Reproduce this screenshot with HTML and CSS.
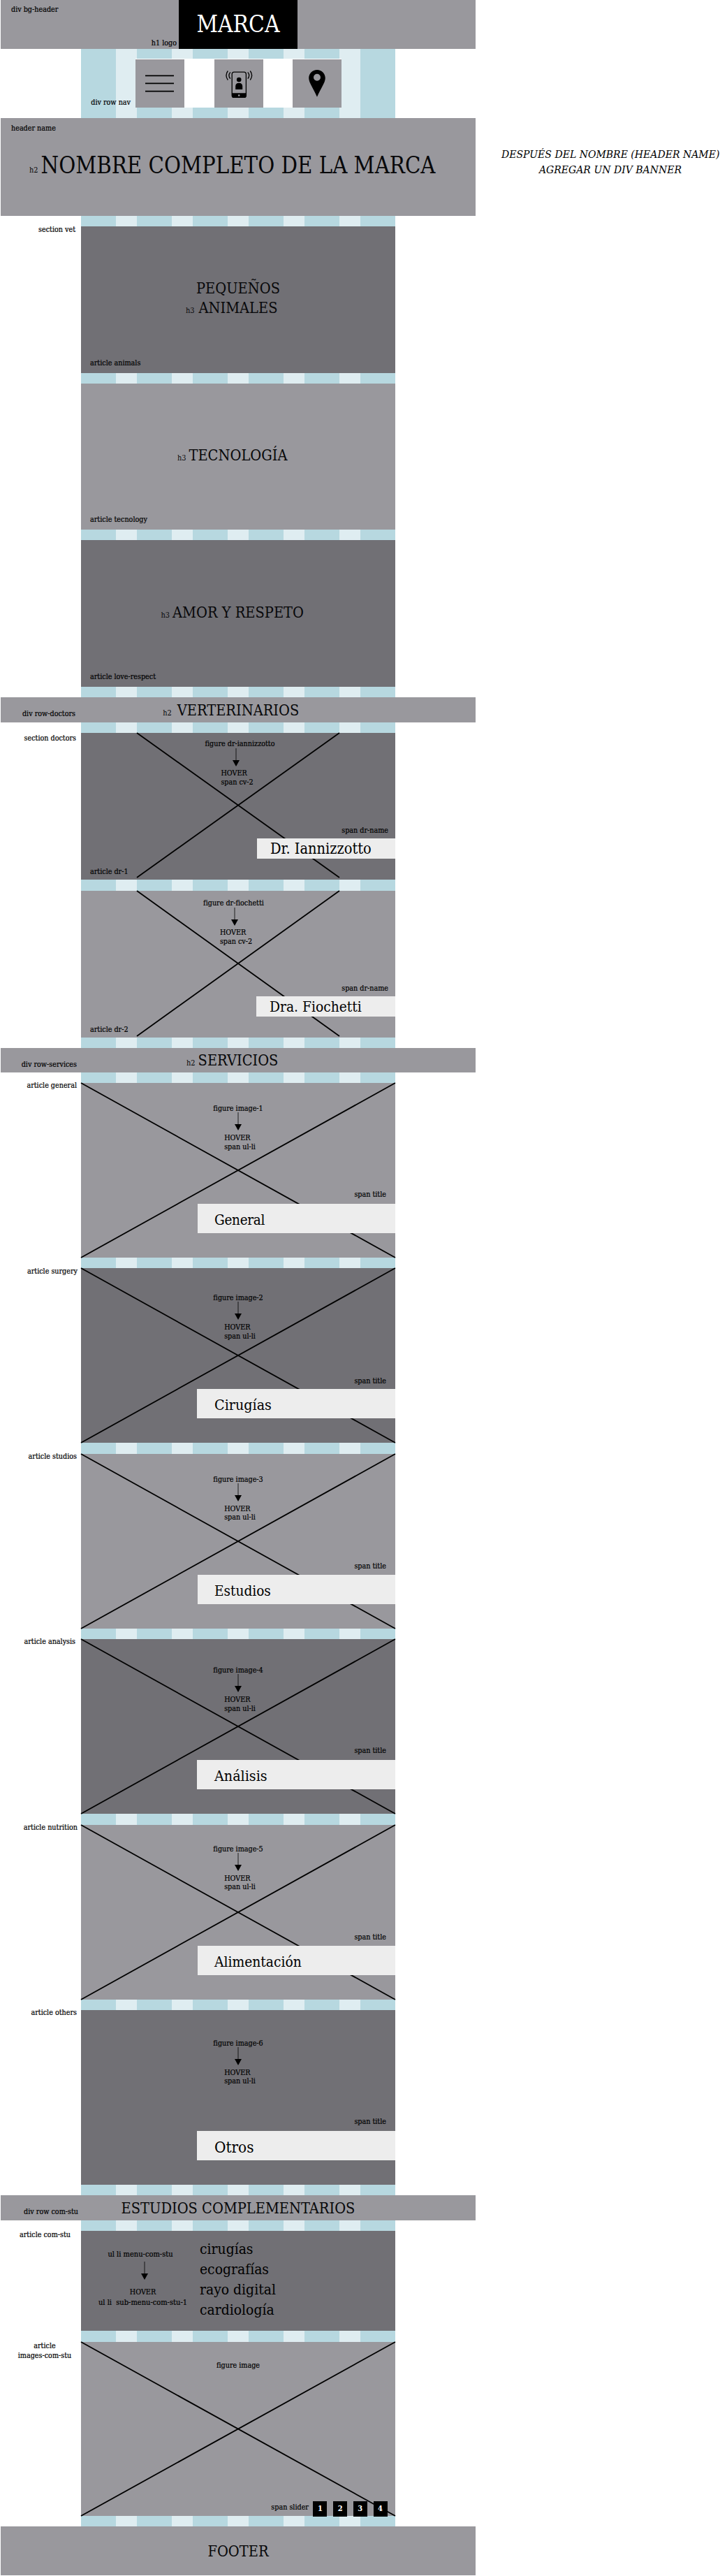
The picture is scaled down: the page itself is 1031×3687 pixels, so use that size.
FILE: index.html
```html
<!DOCTYPE html>
<html lang="es">
<head>
<meta charset="utf-8">
<title>Marca</title>
<link rel="stylesheet" href="styles.css">
</head>
<body>
<svg class="defs" width="0" height="0">
  <symbol id="arrow" viewBox="0 0 10 26"><path d="M5 0V18" stroke="#000" stroke-width="0.8"/><path d="M0 17H10L5 26Z"/></symbol>
</svg>
<main class="layout">
  <header class="bg-header">
    <span class="label at-top">div bg-header</span>
    <span class="label logo-label">h1 logo</span>
    <h1 class="logo">MARCA</h1>
  </header>

  <nav class="row-nav">
    <span class="label nav-label">div row nav</span>
    <div class="nav-items">
      <a class="nav-item"><svg width="70" height="69" viewBox="0 0 70 69"><path d="M14 23.4H55M14 34.4H55M14 45.6H55" stroke="#000" stroke-width="1.7"/></svg></a>
      <a class="nav-item"><svg width="70" height="69" viewBox="0 0 70 69">
        <rect x="25.2" y="18.2" width="20.2" height="36.2" rx="3" fill="none" stroke="#000" stroke-width="1.3"/>
        <path d="M25 48.3H45.6V52Q45.600 55 42.600 55H28Q25 55 25 52Z"/>
        <circle cx="35.2" cy="51.600" r="1.3" fill="#99989d"/>
        <circle cx="35.2" cy="29" r="3.3"/>
        <path d="M30.200 43V38.500Q30.200 33.700 35.200 33.700T40.200 38.500V43Z"/>
        <path d="M19.300 16.500Q14.600 23 19.300 29.500M22.800 18.300Q19 23 22.800 27.700M51.300 16.500Q56 23 51.300 29.500M47.800 18.300Q51.600 23 47.800 27.700" fill="none" stroke="#000" stroke-width="1.3"/>
      </svg></a>
      <a class="nav-item"><svg width="70" height="69" viewBox="0 0 70 69"><path fill-rule="evenodd" d="M35 15C28.300 15 23.200 20.200 23.200 26.800C23.200 33.500 30 42 35 53.700C40 42 46.800 33.500 46.800 26.800C46.800 20.200 41.700 15 35 15ZM35 20.800A5 5 0 1 1 35 30.800A5 5 0 1 1 35 20.800Z"/></svg></a>
    </div>
  </nav>

  <header class="header-name">
    <span class="label at-top">header name</span>
    <h2 class="brand"><span class="line"><small class="lead">h2</small>NOMBRE COMPLETO DE LA MARCA</span></h2>
  </header>

  <section class="vet">
    <span class="label side">section vet</span>
    <article class="card dark double">
      <h3 class="title"><span>PEQUEÑOS</span><span class="line"><small class="lead">h3</small>ANIMALES</span></h3>
      <span class="label corner">article animals</span>
    </article>
    <article class="card tecnology">
      <h3 class="title"><span class="line"><small class="lead">h3</small>TECNOLOGÍA</span></h3>
      <span class="label corner">article tecnology</span>
    </article>
    <article class="card dark">
      <h3 class="title"><span class="line"><small class="lead">h3</small>AMOR Y RESPETO</span></h3>
      <span class="label corner">article love-respect</span>
    </article>
  </section>

  <div class="band row-doctors">
    <span class="label">div row-doctors</span>
    <h2 class="title"><span class="line"><small class="lead">h2</small>VERTERINARIOS</span></h2>
  </div>

  <section class="doctors">
    <span class="label side">section doctors</span>
    <article class="doctor dark">
      <svg class="cross narrow" width="290" height="207"><path d="M0 0L290 207M290 0L0 207"/></svg>
      <span class="label figure">figure dr-iannizzotto</span>
      <svg class="arrow" width="10" height="26"><use href="#arrow"/></svg>
      <p class="label hover">HOVER<br>span cv-2</p>
      <span class="label name-label">span dr-name</span>
      <strong class="tag">Dr. Iannizzotto</strong>
      <span class="label article-label">article dr-1</span>
    </article>
    <article class="doctor second">
      <svg class="cross narrow" width="290" height="208"><path d="M0 0L290 208M290 0L0 208"/></svg>
      <span class="label figure">figure dr-fiochetti</span>
      <svg class="arrow" width="10" height="26"><use href="#arrow"/></svg>
      <p class="label hover">HOVER<br>span cv-2</p>
      <span class="label name-label">span dr-name</span>
      <strong class="tag">Dra. Fiochetti</strong>
      <span class="label article-label">article dr-2</span>
    </article>
  </section>

  <div class="band row-services">
    <span class="label">div row-services</span>
    <h2 class="title"><span class="line"><small class="lead">h2</small>SERVICIOS</span></h2>
  </div>

  <section class="services">
    <div class="service-row general">
      <span class="label side">article general</span>
      <article class="service">
        <svg class="cross" width="450" height="250"><path d="M0 0L450 250M450 0L0 250"/></svg>
        <span class="label">figure image-1</span>
        <svg class="arrow" width="10" height="26"><use href="#arrow"/></svg>
        <p class="label hover">HOVER<br>span ul-li</p>
        <span class="label title-label">span title</span>
        <strong class="tag">General</strong>
      </article>
    </div>
    <div class="service-row surgery">
      <span class="label side">article surgery</span>
      <article class="service dark">
        <svg class="cross" width="450" height="250"><path d="M0 0L450 250M450 0L0 250"/></svg>
        <span class="label">figure image-2</span>
        <svg class="arrow" width="10" height="26"><use href="#arrow"/></svg>
        <p class="label hover">HOVER<br>span ul-li</p>
        <span class="label title-label">span title</span>
        <strong class="tag">Cirugías</strong>
      </article>
    </div>
    <div class="service-row studios">
      <span class="label side">article studios</span>
      <article class="service">
        <svg class="cross" width="450" height="250"><path d="M0 0L450 250M450 0L0 250"/></svg>
        <span class="label">figure image-3</span>
        <svg class="arrow" width="10" height="26"><use href="#arrow"/></svg>
        <p class="label hover">HOVER<br>span ul-li</p>
        <span class="label title-label">span title</span>
        <strong class="tag">Estudios</strong>
      </article>
    </div>
    <div class="service-row analysis">
      <span class="label side">article analysis</span>
      <article class="service dark">
        <svg class="cross" width="450" height="250"><path d="M0 0L450 250M450 0L0 250"/></svg>
        <span class="label">figure image-4</span>
        <svg class="arrow" width="10" height="26"><use href="#arrow"/></svg>
        <p class="label hover">HOVER<br>span ul-li</p>
        <span class="label title-label">span title</span>
        <strong class="tag">Análisis</strong>
      </article>
    </div>
    <div class="service-row nutrition">
      <span class="label side">article nutrition</span>
      <article class="service">
        <svg class="cross" width="450" height="250"><path d="M0 0L450 250M450 0L0 250"/></svg>
        <span class="label">figure image-5</span>
        <svg class="arrow" width="10" height="26"><use href="#arrow"/></svg>
        <p class="label hover">HOVER<br>span ul-li</p>
        <span class="label title-label">span title</span>
        <strong class="tag">Alimentación</strong>
      </article>
    </div>
    <div class="service-row others">
      <span class="label side">article others</span>
      <article class="service dark">
        <span class="label">figure image-6</span>
        <svg class="arrow" width="10" height="26"><use href="#arrow"/></svg>
        <p class="label hover">HOVER<br>span ul-li</p>
        <span class="label title-label">span title</span>
        <strong class="tag">Otros</strong>
      </article>
    </div>
  </section>

  <div class="band row-com-stu">
    <span class="label">div row com-stu</span>
    <h2 class="title">ESTUDIOS COMPLEMENTARIOS</h2>
  </div>

  <section class="com-stu">
    <span class="label side">article com-stu</span>
    <article class="menu dark">
      <div class="menu-notes">
        <span class="label menu-name">ul li menu-com-stu</span>
        <svg class="arrow" width="10" height="28"><use href="#arrow"/></svg>
        <span class="label menu-hover">HOVER</span>
        <span class="label submenu-name">ul li &nbsp;sub-menu-com-stu-1</span>
      </div>
      <ul class="menu-list">
        <li>cirugías</li>
        <li>ecografías</li>
        <li>rayo digital</li>
        <li>cardiología</li>
      </ul>
    </article>
  </section>

  <section class="images-com-stu">
    <p class="label side">article<br>images-com-stu</p>
    <article class="gallery">
      <svg class="cross" width="450" height="249"><path d="M0 0L450 249M450 0L0 249"/></svg>
      <span class="label">figure image</span>
      <div class="slider">
        <span class="label">span slider</span>
        <b class="dot">1</b><b class="dot">2</b><b class="dot">3</b><b class="dot">4</b>
      </div>
    </article>
  </section>

  <footer class="footer"><span class="title">FOOTER</span></footer>
</main>
<aside class="note">DESPUÉS DEL NOMBRE (HEADER NAME)<br>AGREGAR UN DIV BANNER</aside>
</body>
</html>
```
FILE: styles.css
```css
* { box-sizing: border-box; margin: 0; padding: 0; }

body {
  display: flex;
  width: 1031px;
  height: 3687px;
  overflow: hidden;
  background: #fff;
  color: #000;
  font-family: "DejaVu Serif Condensed", "DejaVu Serif", serif;
  font-stretch: condensed;
}

h1, h2, h3, strong { font-weight: 400; }
.defs { position: absolute; }

/* 450px column guide: six 50px columns with 30px gutters */
.layout {
  width: 681px;
  height: 3686px;
  flex: none;
  padding-left: 1px;
  background: repeating-linear-gradient(90deg, #b7d8e0 0 50px, #dfedf1 50px 80px) 116px 0 / 450px 100% no-repeat;
}

.label { font-size: 10.7px; line-height: 12px; white-space: nowrap; transform: translateY(1px); -webkit-text-stroke: 0.2px #000; }
.title { font-size: 21.6px; line-height: 28px; white-space: nowrap; color: #08080a; }
.line { position: relative; }
.lead { position: absolute; right: 100%; bottom: 2px; margin-right: 4px; font-size: 10.9px; line-height: 13px; }
.dark { background: #717075 !important; }

/* header */
.bg-header { position: relative; height: 70px; background: #99989d; }
.at-top { position: absolute; left: 15px; top: 7px; }
.logo-label { position: absolute; right: 428px; bottom: 3px; }
.logo { width: 170px; height: 70px; margin: 0 auto; background: #000; color: #fff; font-size: 33.2px; line-height: 70px; text-align: center; }

.row-nav { position: relative; height: 99px; padding: 14px 0 0 193px; }
.nav-label { position: absolute; right: 494px; top: 70px; }
.nav-items { display: flex; justify-content: space-between; width: 295px; height: 70px; padding-top: 1px; background: #fff; }
.nav-item { width: 70px; height: 69px; background: #99989d; }
.nav-item svg { display: block; }

.header-name { position: relative; height: 140px; padding-bottom: 4px; background: #99989d; display: flex; align-items: center; justify-content: center; }
.header-name .at-top { top: 8px; }
.brand { font-size: 32.6px; line-height: 40px; white-space: nowrap; color: #08080a; }
.brand .lead { bottom: 6px; }

/* rows: side label column + 450px content column */
.vet, .doctors { display: grid; grid-template-columns: 115px 450px; row-gap: 15px; margin-top: 15px; }
.vet article, .doctors article { grid-column: 2; }
.side { text-align: right; padding-right: 8px; margin-top: -2px; }

.card { position: relative; height: 210px; padding-bottom: 2px; background: #99989d; display: flex; align-items: center; justify-content: center; }
.card .title { display: flex; flex-direction: column; align-items: center; }
.card .lead { bottom: 4px; }
.double { padding-bottom: 4px; }
.double .lead { margin-right: 6px; }
.tecnology { height: 209px; padding-bottom: 4px; }
.corner { position: absolute; left: 13px; bottom: 9px; }

.band { display: grid; grid-template-columns: 115px 450px; height: 36px; margin-top: 15px; background: #99989d; }
.band .title { text-align: center; padding-top: 5px; }
.band .label { text-align: right; padding: 17px 6px 0 0; }
.row-doctors .label { padding-right: 8px; }
.row-doctors .lead { margin-right: 8px; }
.row-services { height: 35px; }
.row-services .title { padding-top: 4px; }
.row-com-stu .label { padding-right: 4px; }

/* placeholders */
.cross { position: absolute; left: 0; top: 0; z-index: 0; overflow: visible; }
.cross path { fill: none; stroke: #000; stroke-width: 1.8; }
.narrow { left: 80px; }
.arrow { flex: none; }
.doctor > :not(.cross), .service > :not(.cross), .gallery > :not(.cross) { position: relative; z-index: 1; }
.tag { flex: none; background: #ededed; font-size: 21.3px; white-space: nowrap; }

.doctors { row-gap: 16px; }
.doctors .side { margin-top: 1px; padding-right: 7px; }
.doctor { position: relative; display: flex; flex-direction: column; align-items: center; height: 210px; padding-top: 9px; background: #99989d; }
.doctor .figure { margin-left: 5px; }
.doctor .arrow { margin: 1px 7px 0 0; }
.doctor .hover { margin: 3px 3px 0 0; line-height: 12.5px; }
.doctor .name-label { align-self: flex-end; margin: auto 10px 6px 0; }
.doctor .tag { align-self: flex-end; width: 198px; height: 29px; padding-left: 19px; font-size: 21.6px; line-height: 30px; }
.doctor .article-label { align-self: flex-start; margin: 12px 0 6px 13px; }
.second { padding-top: 11px; }
.second .figure { margin: 0 13px 0 0; }
.second .arrow { margin-right: 10px; }
.second .hover { margin-right: 6px; }
.second .tag { width: 199px; font-size: 20.8px; }

.services { display: flex; flex-direction: column; gap: 15.4px; margin-top: 15px; }
.service-row { display: grid; grid-template-columns: 115px 450px; }
.service-row .side { margin-top: -3px; padding-right: 6px; }
.service { position: relative; display: flex; flex-direction: column; align-items: center; height: 250px; padding: 30px 0 35px; background: #99989d; }
.service .hover { margin: 4px 0 0 5px; line-height: 12.5px; }
.service .title-label { align-self: flex-end; margin: auto 13px 8px 0; }
.service .tag { align-self: flex-end; width: 283px; height: 42px; padding-left: 24px; line-height: 46px; }
.service.dark .tag { width: 284.5px; padding-left: 25.5px; }
.general .tag { font-size: 20.5px; letter-spacing: -0.3px; }
.surgery .service { padding-top: 36px; }
.surgery .title-label { margin-bottom: 6px; }
.surgery .side { padding-right: 5px; margin-top: -2px; }
.studios .title-label { margin-bottom: 7px; }
.studios .tag { font-size: 20.6px; }
.analysis .service { padding-top: 38px; }
.analysis .side { padding-right: 8px; }
.nutrition .service { padding-top: 28px; }
.nutrition .side { padding-right: 5px; }
.nutrition .title-label { margin-bottom: 7px; }
.nutrition .tag { font-size: 20.8px; }
.others .service { padding-top: 41px; }
.others .tag { font-size: 22.3px; }

.com-stu, .images-com-stu { display: grid; grid-template-columns: 115px 450px; margin-top: 15px; }
.com-stu .side { margin-top: -1px; padding-right: 15px; }
.menu { display: flex; height: 143px; }
.menu-notes { display: flex; flex-direction: column; align-items: center; width: 127px; margin: 27px 18px 0 25px; }
.menu-name { margin-right: 7px; font-size: 11px; }
.menu-notes .arrow { margin: 4px 0 0 4px; }
.menu-hover { margin-top: 10px; }
.submenu-name { margin-top: 3px; font-size: 11px; }
.menu-list { list-style: none; padding-top: 12px; font-size: 20.9px; line-height: 29px; }

.images-com-stu { margin-top: 16px; }
.images-com-stu .side { line-height: 14.5px; margin-top: -2px; text-align: center; padding: 0 0 0 11px; }
.gallery { position: relative; display: flex; flex-direction: column; align-items: center; height: 249px; padding-top: 27px; background: #99989d; }
.slider { display: flex; align-items: flex-start; align-self: flex-end; margin: auto 11.5px -1px 0; }
.slider .label { margin-top: 2px; }
.dot { width: 20px; height: 22px; margin-left: 8.7px; background: #000; color: #fff; font-size: 11px; line-height: 21px; text-align: center; }
.label + .dot { margin-left: 6.5px; }

.footer { display: flex; align-items: center; justify-content: center; height: 70px; margin-top: 15px; padding-top: 3px; background: #99989d; }

.note { width: 312px; margin: 210px 0 0 37px; font-size: 15.6px; font-style: italic; line-height: 22px; text-align: center; white-space: nowrap; }
```
